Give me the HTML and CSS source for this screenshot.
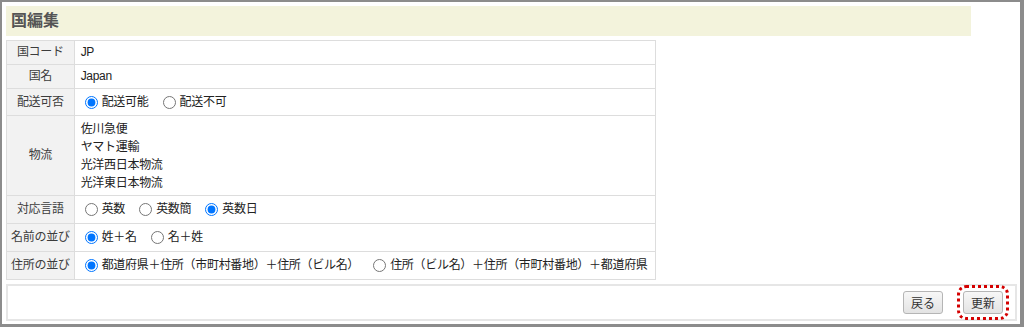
FILE: index.html
```html
<!DOCTYPE html>
<html>
<head>
    <title>国編集</title>
    <link rel="stylesheet" href="styles.css">
</head>
<body>
    <div class="frame">
        <h2 class="page-title">国編集</h2>

        <table class="edit-table">
            <tr>
                <th>国コード</th>
                <td>JP</td>
            </tr>
            <tr>
                <th>国名</th>
                <td>Japan</td>
            </tr>
            <tr class="tight">
                <th>配送可否</th>
                <td>
                    <label class="radio"><input type="radio" name="delivery" checked>配送可能</label>
                    <label class="radio"><input type="radio" name="delivery">配送不可</label>
                </td>
            </tr>
            <tr>
                <th>物流</th>
                <td class="logistics">
                    <div>佐川急便</div>
                    <div>ヤマト運輸</div>
                    <div>光洋西日本物流</div>
                    <div>光洋東日本物流</div>
                </td>
            </tr>
            <tr>
                <th>対応言語</th>
                <td>
                    <label class="radio"><input type="radio" name="lang">英数</label>
                    <label class="radio"><input type="radio" name="lang">英数簡</label>
                    <label class="radio"><input type="radio" name="lang" checked>英数日</label>
                </td>
            </tr>
            <tr>
                <th>名前の並び</th>
                <td>
                    <label class="radio"><input type="radio" name="name_order" checked>姓＋名</label>
                    <label class="radio"><input type="radio" name="name_order">名＋姓</label>
                </td>
            </tr>
            <tr>
                <th>住所の並び</th>
                <td>
                    <label class="radio"><input type="radio" name="addr_order" checked>都道府県＋住所（市町村番地）＋住所（ビル名）</label>
                    <label class="radio"><input type="radio" name="addr_order">住所（ビル名）＋住所（市町村番地）＋都道府県</label>
                </td>
            </tr>
        </table>

        <div class="actions">
            <button class="btn">戻る</button>
            <button class="btn btn-focus">更新</button>
        </div>
    </div>
</body>
</html>
```

FILE: styles.css
```css
body {
    margin: 0;
    font-family: "Liberation Sans", "Noto Sans CJK JP", sans-serif;
    background-color: #fff;
}

.frame {
    box-sizing: border-box;
    height: 327px;
    border-style: solid;
    border-color: #8c8c8c;
    border-width: 2px 4px 3px 2px;
    padding: 4px 3px 3px 4px;
    display: flex;
    flex-direction: column;
}

.page-title {
    box-sizing: border-box;
    width: 965px;
    height: 30px;
    margin: 0;
    padding-left: 5px;
    background-color: #f3f3dc;
    color: #555;
    font-size: 16px;
    font-weight: bold;
    line-height: 30px;
}

/* tabla de edicion */
.edit-table {
    margin-top: 4px;
    width: 650px;
    border-collapse: collapse;
    border: 1px solid #dcdcdc;
    font-size: 12px;
    letter-spacing: -0.3px;
}

.edit-table th {
    padding: 4px;
    background-color: #f2f2f2;
    color: #3c3c3c;
    font-weight: normal;
    white-space: nowrap;
    border: 1px solid #ddd;
    line-height: 15px;
}

.edit-table td {
    padding: 4px 6px;
    color: #222;
    white-space: nowrap;
    border: 1px solid #ddd;
    line-height: 15px;
}

.edit-table td.logistics {
    padding: 4px 6px 3px;
    line-height: 18px;
}

.radio {
    display: inline-flex;
    align-items: center;
    height: 19px;
    margin-right: 7px;
    vertical-align: middle;
}

.tight .radio {
    height: 18px;
}

.radio:last-child {
    margin-right: 0;
}

.radio input {
    width: 13px;
    height: 13px;
    margin: 0 4px;
}

/* botones */
.actions {
    flex: 1;
    margin-top: 4px;
    padding-right: 12px;
    border: 2px solid #e6e6e6;
    display: flex;
    justify-content: flex-end;
    align-items: center;
    gap: 20px;
}

.btn {
    height: 23px;
    padding: 0 7px;
    font-family: "Liberation Sans", "Noto Sans CJK JP", sans-serif;
    font-size: 12px;
    color: #333;
    background: linear-gradient(#f7f7f7, #e3e3e3);
    border: 1px solid #b5b5b5;
    border-radius: 3px;
    cursor: pointer;
}

.btn-focus {
    outline: 3px dotted #d40000;
    outline-offset: 3px;
}
```
